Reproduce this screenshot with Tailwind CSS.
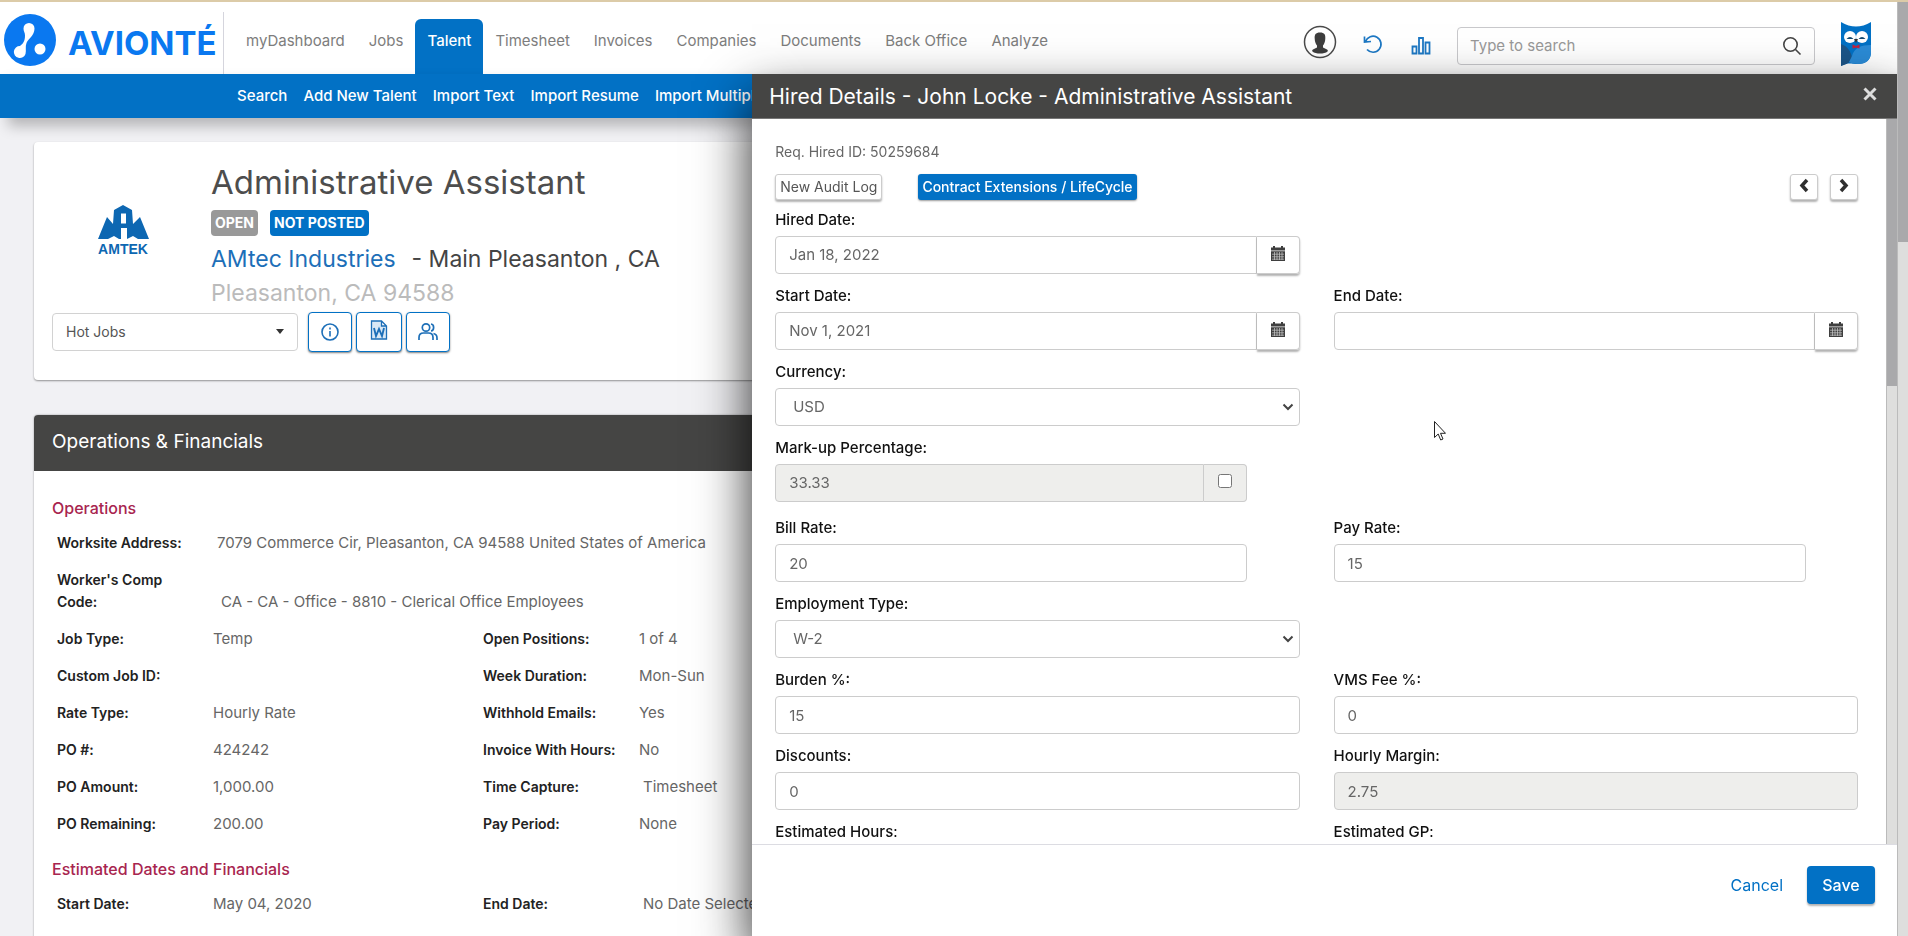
<!DOCTYPE html>
<html lang="en">
  <head>
    <meta charset="UTF-8" />
    <meta name="viewport" content="width=device-width, initial-scale=1.0" />
    <title>Hired Details</title>
    <script src="https://cdn.jsdelivr.net/npm/@tailwindcss/browser@4"></script>
    <style>
      * {
        font-family: "Inter", "Open Sans", sans-serif;
      }
    </style>
  </head>
  <body class="h-screen overflow-hidden bg-[#f1f1f4] text-[15px] text-[#666]">
    <!-- shared icons -->
    <svg class="hidden">
      <symbol id="calendar" viewBox="0 0 14 15">
        <path d="M0 1.500h14v3H0z M2 0h2v2H2z M10 0h2v2h-2z M0 5.300h14V15H0z" fill="#3f3f3f" />
        <path d="M1 8.200h12M1 10.800h12M1 13.200h12M3.500 6v8M6 6v8M8.500 6v8M11 6v8" stroke="#ccc" stroke-width=".7" />
      </symbol>
      <symbol id="chevron" viewBox="0 0 12 8">
        <path d="M1.500 1.500 6 6l4.500-4.500" fill="none" stroke="#444" stroke-width="2" />
      </symbol>
    </svg>

    <div class="flex h-full border-t-2 border-[#dccba8]">
      <div class="flex min-w-0 flex-1 flex-col">
        <!-- top bar -->
        <header class="flex h-[72px] shrink-0 items-stretch bg-white">
          <a href="#" class="mt-2.5 flex w-56 items-center gap-3 border-r border-[#d5d5dd] pb-1.5 pl-1">
            <svg class="h-[52px] w-[52px] shrink-0" viewBox="0 0 52 52">
              <circle cx="26" cy="26" r="26" fill="#0a78f0" />
              <path d="M25 9a5.500 5.500 0 0 0-5.500 5.500c0 3 1.500 4 1.500 7 0 6-2 8-5 10.500a6 6 0 1 0 5.500 8c1-4-.5-7 1-11 1.500-4.500 8-7 8-14.500A5.500 5.500 0 0 0 25 9z" fill="#fff" />
              <circle cx="36" cy="35" r="5.500" fill="#fff" />
            </svg>
            <span class="pt-1.5 font-['Open_Sans'] text-[33px] leading-none font-bold text-[#0a78f0]">AVIONTÉ</span>
          </a>
          <nav class="flex pt-[17px] pl-2.5 text-[15px] whitespace-nowrap text-[#7d7d7d]">
            <a href="#" class="px-3 pt-[11px]">myDashboard</a>
            <a href="#" class="px-3 pt-[11px]">Jobs</a>
            <a href="#" class="rounded-t-md bg-[#0271c5] px-3 pt-[11px] font-medium text-white">Talent</a>
            <a href="#" class="px-3 pt-[11px]">Timesheet</a>
            <a href="#" class="px-3 pt-[11px]">Invoices</a>
            <a href="#" class="px-3 pt-[11px]">Companies</a>
            <a href="#" class="px-3 pt-[11px]">Documents</a>
            <a href="#" class="px-3 pt-[11px]">Back Office</a>
            <a href="#" class="px-3 pt-[11px]">Analyze</a>
          </nav>
          <div class="ml-auto flex items-center gap-6 pt-4 pr-[26px]">
            <button aria-label="Profile">
              <svg class="mb-2 h-[34px] w-[34px]" viewBox="0 0 34 34">
                <circle cx="17" cy="17" r="15.500" fill="#fff" stroke="#4a4a4a" stroke-width="1.500" />
                <path d="M17 7.500c-4.500 0-5.600 2.200-5.300 6 .1 3 1 5.500 2.300 7v2L10 24.500c-1 .5-1 1.500-.5 2C11 28 14 28.500 17 28.500s6-.5 7.500-2c.5-.5.5-1.500-.5-2l-4-2v-2c1.300-1.500 2.200-4 2.300-7 .3-3.800-.8-6-5.300-6z" fill="#3d3d3d" />
              </svg>
            </button>
            <button aria-label="Refresh">
              <svg class="mb-1 h-6 w-6" viewBox="0 0 24 24" fill="none" stroke="#1d78c4" stroke-width="1.700">
                <path d="M4.500 9.500A8 8 0 1 1 6 17.500M3.500 4.500v5.500l6.500-.5" />
              </svg>
            </button>
            <button aria-label="Reports">
              <svg class="h-6 w-6" viewBox="0 0 24 24" fill="none" stroke="#1d78c4" stroke-width="1.800">
                <path d="M3.500 12.500h4v7h-4zM10 4h4v15.500h-4zM16.500 8.500h4v11h-4z" />
              </svg>
            </button>
            <div class="flex h-[38px] w-[358px] items-center rounded border border-[#c9c9cc] bg-white/60 px-3">
              <input type="text" aria-label="Search" placeholder="Type to search" class="min-w-0 flex-1 bg-transparent text-[15px] outline-none placeholder:text-[#999]" />
              <svg class="h-5 w-5" viewBox="0 0 20 20" fill="none" stroke="#444" stroke-width="1.600">
                <circle cx="8.500" cy="8.500" r="6.700" />
                <path d="m13.500 13.500 5 5" />
              </svg>
            </div>
            <svg class="mb-1 ml-0.5 h-11 w-[30px]" viewBox="0 0 30 44">
              <path d="M0 0q15 9 30 0v30c0 8-5 12-13 12-7 0-10-2-17 2z" fill="#0271c5" />
              <path d="M0 22c6 2 10 7 11 14-1 4-5 6-11 8z" fill="#1c5588" />
              <path d="M11 34c2-8 9-11 19-11v7c0 8-5 12-13 12-4 0-7-1-9-2z" fill="#2b8bd6" />
              <circle cx="9" cy="15" r="6" fill="#fff" />
              <circle cx="21" cy="15" r="6" fill="#fff" />
              <path d="M5.500 17q3.500-4 7 0zM17.500 17q3.500-4 7 0z" fill="#12486f" />
              <path d="m13 17 2 4 2-4z" fill="#333" />
              <path d="m11.500 22.500 3.500 1.500 3.500-1.500v4L15 25.500l-3.500 1z" fill="#c4213c" />
            </svg>
          </div>
        </header>

        <!-- sub navigation -->
        <nav class="z-10 flex h-11 shrink-0 items-center gap-4 bg-[#0271c5] pl-[237px] text-[15px] font-medium whitespace-nowrap text-white shadow-[8px_8px_14px_rgba(0,0,0,0.25)]">
          <a href="#">Search</a>
          <a href="#">Add New Talent</a>
          <a href="#">Import Text</a>
          <a href="#">Import Resume</a>
          <a href="#">Import Multiple</a>
        </nav>

        <main class="min-h-0 flex-1 overflow-hidden pt-6 pr-8 pl-[34px]">
          <section class="h-[238px] rounded bg-white px-[18px] pt-5 shadow-[0_1px_2px_rgba(0,0,0,0.4)]">
            <div class="flex">
              <svg class="mt-[42px] ml-[43px] h-[52px] w-[56px] shrink-0" viewBox="0 0 56 52">
                <path d="M28 1 37 6l1 14 7-7 9 22H43l-5-3-6 3V24h-6v11h-2l-5-3-6 3H3l9-22 6 7 1-14zM26 9.500h5v10h-5z" fill="#0d67b2" fill-rule="evenodd" />
                <text x="28" y="50" text-anchor="middle" font-size="14" font-weight="700" fill="#0d67b2" style="font-family: 'Liberation Sans'">AMTEK</text>
              </svg>
              <div class="ml-[60px] whitespace-nowrap">
                <h1 class="text-[33px] leading-10 text-[#4d4d4d]">Administrative Assistant</h1>
                <div class="mt-2 flex gap-3 text-sm font-bold text-white">
                  <span class="rounded bg-[#999] px-1 leading-[26px]">OPEN</span>
                  <span class="rounded bg-[#0271c5] px-1 leading-[26px]">NOT POSTED</span>
                </div>
                <p class="mt-1.5 flex gap-4 text-[23px] leading-[34px] text-[#444]">
                  <a href="#" class="text-[#1d6fb8]">AMtec Industries</a>
                  <span>- Main Pleasanton , CA</span>
                </p>
                <p class="text-[23px] leading-[34px] text-[#bbb]">Pleasanton, CA 94588</p>
              </div>
            </div>
            <div class="mt-0.5 flex items-center">
              <div class="relative">
                <select aria-label="List" class="block h-[38px] w-[246px] appearance-none rounded border border-[#d2d2d2] bg-white px-[13px] text-sm text-[#555]">
                  <option>Hot Jobs</option>
                </select>
                <svg class="pointer-events-none absolute top-4 right-3.5 h-[5px] w-2" viewBox="0 0 8 5"><path d="M0 0h8L4 5z" fill="#333" /></svg>
              </div>
              <button aria-label="Information" class="ml-2.5 flex h-10 w-11 items-center justify-center rounded border border-[#0271c5] bg-white shadow-[0_1px_2px_rgba(0,0,0,0.5)]">
                <svg class="h-5 w-5" viewBox="0 0 20 20" fill="none" stroke="#1d6fb8" stroke-width="1.600">
                  <circle cx="10" cy="10" r="8" />
                  <path d="M10 9v5.500M10 5.500v2" />
                </svg>
              </button>
              <button aria-label="Word document" class="ml-1 flex h-10 w-[46px] items-center justify-center rounded border border-[#0271c5] bg-white shadow-[0_1px_2px_rgba(0,0,0,0.5)]">
                <svg class="mb-1 h-5 w-5" viewBox="0 0 20 20" fill="none" stroke="#1d6fb8" stroke-width="1.300">
                  <path d="M2.500 1h10l5 5v13h-15zM12.500 1v5h5" fill="#d9e8f5" />
                  <path d="m5 8 2 8 3-7 3 7 2-8" stroke-width="1.900" />
                </svg>
              </button>
              <button aria-label="Candidates" class="ml-1 flex h-10 w-11 items-center justify-center rounded border border-[#0271c5] bg-white shadow-[0_1px_2px_rgba(0,0,0,0.5)]">
                <svg class="h-5 w-5" viewBox="0 0 20 20" fill="none" stroke="#1d6fb8" stroke-width="1.700">
                  <circle cx="8" cy="5.500" r="3.700" />
                  <path d="M1 18v-2.500c0-3 2-4.500 4.500-4.500h5c2.500 0 4.500 1.500 4.500 4.500V18M13 2c3.500.5 3.500 6.500 0 7M15.500 11.500c2.500.5 3.500 2 3.500 4.500v2" />
                </svg>
              </button>
            </div>
          </section>

          <section class="mt-[35px] h-[800px] rounded bg-white shadow-[0_0_2px_rgba(0,0,0,0.4)]">
            <h2 class="rounded-t bg-[#454544] px-[18px] pb-0.5 text-[19px] leading-[54px] text-white">Operations &amp; Financials</h2>
            <div class="px-[18px] pt-[25px] whitespace-nowrap">
              <h3 class="text-base leading-6 font-medium text-[#a8254f]">Operations</h3>
              <dl class="mt-1 grid grid-cols-[156px_270px_156px_1fr] gap-y-[15px] pt-2 pl-[5px] text-[15px] leading-[22px]">
                <dt class="text-sm leading-[22px] font-semibold text-[#222]">Worksite Address:</dt>
                <dd class="col-span-3 pl-1">7079 Commerce Cir, Pleasanton, CA 94588 United States of America</dd>
                <dt class="text-sm leading-[22px] font-semibold text-[#222]">Worker's Comp<br />Code:</dt>
                <dd class="col-span-3 self-end pl-2">CA - CA - Office - 8810 - Clerical Office Employees</dd>
                <dt class="text-sm leading-[22px] font-semibold text-[#222]">Job Type:</dt>
                <dd>Temp</dd>
                <dt class="text-sm leading-[22px] font-semibold text-[#222]">Open Positions:</dt>
                <dd>1 of 4</dd>
                <dt class="text-sm leading-[22px] font-semibold text-[#222]">Custom Job ID:</dt>
                <dd></dd>
                <dt class="text-sm leading-[22px] font-semibold text-[#222]">Week Duration:</dt>
                <dd>Mon-Sun</dd>
                <dt class="text-sm leading-[22px] font-semibold text-[#222]">Rate Type:</dt>
                <dd>Hourly Rate</dd>
                <dt class="text-sm leading-[22px] font-semibold text-[#222]">Withhold Emails:</dt>
                <dd>Yes</dd>
                <dt class="text-sm leading-[22px] font-semibold text-[#222]">PO #:</dt>
                <dd>424242</dd>
                <dt class="text-sm leading-[22px] font-semibold text-[#222]">Invoice With Hours:</dt>
                <dd>No</dd>
                <dt class="text-sm leading-[22px] font-semibold text-[#222]">PO Amount:</dt>
                <dd>1,000.00</dd>
                <dt class="text-sm leading-[22px] font-semibold text-[#222]">Time Capture:</dt>
                <dd class="pl-1">Timesheet</dd>
                <dt class="text-sm leading-[22px] font-semibold text-[#222]">PO Remaining:</dt>
                <dd>200.00</dd>
                <dt class="text-sm leading-[22px] font-semibold text-[#222]">Pay Period:</dt>
                <dd>None</dd>
              </dl>
              <h3 class="mt-[22px] text-base leading-6 font-medium text-[#a8254f]">Estimated Dates and Financials</h3>
              <dl class="mt-1 grid grid-cols-[156px_270px_156px_1fr] pt-2 pl-[5px] text-[15px] leading-[22px]">
                <dt class="text-sm leading-[22px] font-semibold text-[#222]">Start Date:</dt>
                <dd>May 04, 2020</dd>
                <dt class="text-sm leading-[22px] font-semibold text-[#222]">End Date:</dt>
                <dd class="pl-1">No Date Selected</dd>
              </dl>
            </div>
          </section>
        </main>
      </div>

      <div class="relative z-30 w-[11px] border-l border-[#bbb] bg-[#dededd]">
        <div class="h-60 bg-[#a9a9ab]"></div>
      </div>
    </div>

    <!-- drawer -->
    <aside class="fixed top-[74px] right-[11px] bottom-0 z-20 flex w-3/5 flex-col bg-white shadow-[0_25px_50px_rgba(0,0,0,0.85)]">
      <div class="flex h-[45px] shrink-0 items-center justify-between border-b border-[#777] bg-[#454544] pr-5 pl-[17px] text-white">
        <h2 class="pt-0.5 text-[21px] leading-7">Hired Details - John Locke - Administrative Assistant</h2>
        <button aria-label="Close" class="pb-1">
          <svg class="h-3.5 w-3.5" viewBox="0 0 14 14" stroke="#ddd" stroke-width="3"><path d="m1.500 1.500 11 11M12.500 1.500l-11 11" /></svg>
        </button>
      </div>

      <div class="flex min-h-0 flex-1">
        <form class="min-w-0 flex-1 overflow-hidden pt-[22px] pr-7 pl-[23px] text-[15px]">
          <p class="text-sm leading-[22px]">Req. Hired ID: 50259684</p>
          <div class="mt-[11px] mb-[9px] flex items-center">
            <button type="button" class="h-[26px] rounded-[3px] border border-[#ccc] bg-white px-1 text-sm text-[#555] shadow-[0_2px_2px_rgba(0,0,0,0.3)]">New Audit Log</button>
            <button type="button" class="ml-9 h-[26px] rounded-[3px] bg-[#0271c5] px-1 text-sm font-medium text-white shadow-[0_1px_2px_rgba(0,0,0,0.4)]">Contract Extensions / LifeCycle</button>
            <button type="button" aria-label="Previous" class="mr-3 ml-auto flex h-[26px] w-7 items-center justify-center rounded-[3px] border border-[#ccc] bg-white pb-1 shadow-[0_2px_2px_rgba(0,0,0,0.3)]">
              <svg class="h-[15px] w-2.5" viewBox="0 0 10 15" fill="none" stroke="#2f2f2f" stroke-width="3.500"><path d="m8 2-5 5.500L8 13" /></svg>
            </button>
            <button type="button" aria-label="Next" class="flex h-[26px] w-7 items-center justify-center rounded-[3px] border border-[#ccc] bg-white pb-1 shadow-[0_2px_2px_rgba(0,0,0,0.3)]">
              <svg class="h-[15px] w-2.5" viewBox="0 0 10 15" fill="none" stroke="#2f2f2f" stroke-width="3.500"><path d="m2 2 5 5.500L2 13" /></svg>
            </button>
          </div>

          <div class="grid grid-cols-2 gap-x-[34px] gap-y-[11px]">
            <div class="col-span-2 grid grid-cols-2 gap-x-[34px]">
              <div>
                <label for="hiredDate" class="mb-[5px] block leading-[22px] font-medium text-[#111]">Hired Date:</label>
                <div class="flex h-[38px]">
                  <input id="hiredDate" type="text" value="Jan 18, 2022" class="min-w-0 flex-1 rounded-l border border-[#ccc] bg-white px-[13px]" />
                  <button type="button" aria-label="Pick hired date" class="flex w-[43px] items-center justify-center rounded-r border border-l-0 border-[#ccc] pb-1 shadow-[0_2px_2px_rgba(0,0,0,0.3)]"><svg class="h-[15px] w-3.5"><use href="#calendar" /></svg></button>
                </div>
              </div>
            </div>
            <div>
              <label for="startDate" class="mb-[5px] block leading-[22px] font-medium text-[#111]">Start Date:</label>
              <div class="flex h-[38px]">
                <input id="startDate" type="text" value="Nov 1, 2021" class="min-w-0 flex-1 rounded-l border border-[#ccc] bg-white px-[13px]" />
                <button type="button" aria-label="Pick start date" class="flex w-[43px] items-center justify-center rounded-r border border-l-0 border-[#ccc] pb-1 shadow-[0_2px_2px_rgba(0,0,0,0.3)]"><svg class="h-[15px] w-3.5"><use href="#calendar" /></svg></button>
              </div>
            </div>
            <div>
              <label for="endDate" class="mb-[5px] block leading-[22px] font-medium text-[#111]">End Date:</label>
              <div class="flex h-[38px]">
                <input id="endDate" type="text" class="min-w-0 flex-1 rounded-l border border-[#ccc] bg-white px-[13px]" />
                <button type="button" aria-label="Pick end date" class="flex w-[43px] items-center justify-center rounded-r border border-l-0 border-[#ccc] pb-1 shadow-[0_2px_2px_rgba(0,0,0,0.3)]"><svg class="h-[15px] w-3.5"><use href="#calendar" /></svg></button>
              </div>
            </div>
            <div class="col-start-1">
              <label for="currency" class="mb-[5px] block leading-[22px] font-medium text-[#111]">Currency:</label>
              <div class="relative">
                <select id="currency" class="block h-[38px] w-full appearance-none rounded border border-[#ccc] bg-white px-[17px]">
                  <option>USD</option>
                </select>
                <svg class="pointer-events-none absolute top-[15px] right-1.5 h-2 w-3"><use href="#chevron" /></svg>
              </div>
            </div>
            <div class="col-start-1 mb-1">
              <label for="markup" class="mb-[5px] block leading-[22px] font-medium text-[#111]">Mark-up Percentage:</label>
              <div class="flex h-[38px] w-9/10">
                <input id="markup" type="text" value="33.33" readonly class="min-w-0 flex-1 rounded-l border border-[#ccc] bg-[#eeeeec] px-[13px]" />
                <span class="flex w-[43px] items-center justify-center rounded-r border border-l-0 border-[#ccc] bg-[#eeeeec] pb-1">
                  <input type="checkbox" aria-label="Override mark-up" class="h-3.5 w-3.5" />
                </span>
              </div>
            </div>
            <div class="col-start-1">
              <label for="billRate" class="mb-[5px] block leading-[22px] font-medium text-[#111]">Bill Rate:</label>
              <input id="billRate" type="text" value="20" class="block h-[38px] w-9/10 rounded border border-[#ccc] bg-white px-[13px]" />
            </div>
            <div>
              <label for="payRate" class="mb-[5px] block leading-[22px] font-medium text-[#111]">Pay Rate:</label>
              <input id="payRate" type="text" value="15" class="block h-[38px] w-9/10 rounded border border-[#ccc] bg-white px-[13px]" />
            </div>
            <div class="col-start-1">
              <label for="employment" class="mb-[5px] block leading-[22px] font-medium text-[#111]">Employment Type:</label>
              <div class="relative">
                <select id="employment" class="block h-[38px] w-full appearance-none rounded border border-[#ccc] bg-white px-[17px]">
                  <option>W-2</option>
                </select>
                <svg class="pointer-events-none absolute top-[15px] right-1.5 h-2 w-3"><use href="#chevron" /></svg>
              </div>
            </div>
            <div class="col-start-1">
              <label for="burden" class="mb-[5px] block leading-[22px] font-medium text-[#111]">Burden %:</label>
              <input id="burden" type="text" value="15" class="block h-[38px] w-full rounded border border-[#ccc] bg-white px-[13px]" />
            </div>
            <div>
              <label for="vmsFee" class="mb-[5px] block leading-[22px] font-medium text-[#111]">VMS Fee %:</label>
              <input id="vmsFee" type="text" value="0" class="block h-[38px] w-full rounded border border-[#ccc] bg-white px-[13px]" />
            </div>
            <div>
              <label for="discounts" class="mb-[5px] block leading-[22px] font-medium text-[#111]">Discounts:</label>
              <input id="discounts" type="text" value="0" class="block h-[38px] w-full rounded border border-[#ccc] bg-white px-[13px]" />
            </div>
            <div>
              <label for="margin" class="mb-[5px] block leading-[22px] font-medium text-[#111]">Hourly Margin:</label>
              <input id="margin" type="text" value="2.75" readonly class="block h-[38px] w-full rounded border border-[#ccc] bg-[#eeeeec] px-[13px]" />
            </div>
            <div>
              <label for="estHours" class="mb-[5px] block leading-[22px] font-medium text-[#111]">Estimated Hours<span class="font-normal">:</span></label>
              <input id="estHours" type="text" class="block h-[38px] w-full rounded border border-[#ccc] bg-white px-[13px]" />
            </div>
            <div>
              <label for="estGp" class="mb-[5px] block leading-[22px] font-medium text-[#111]">Estimated GP<span class="font-normal">:</span></label>
              <input id="estGp" type="text" class="block h-[38px] w-full rounded border border-[#ccc] bg-white px-[13px]" />
            </div>
          </div>
        </form>
        <div class="w-[11px] border-l border-[#bbb] bg-[#dededd]">
          <div class="h-[267px] bg-[#a9a9ab]"></div>
        </div>
      </div>

      <div class="flex h-[92px] shrink-0 items-start justify-end gap-6 border-t border-[#dcdce2] pt-[21px] pr-[22px] text-base">
        <button class="h-[38px] text-[#0271c5]">Cancel</button>
        <button class="h-[38px] w-[68px] rounded bg-[#0271c5] font-medium text-white shadow-[0_2px_2px_rgba(0,0,0,0.3)]">Save</button>
      </div>
    </aside>

    <!-- mouse pointer -->
    <svg class="pointer-events-none fixed top-[421px] left-[1434px] z-30 h-5 w-3" viewBox="0 0 12 20">
      <path d="M.5.500v16l3.700-3.500 2.500 6 2.300-1-2.500-5.700h5z" fill="#fff" stroke="#222" />
    </svg>
  </body>
</html>
